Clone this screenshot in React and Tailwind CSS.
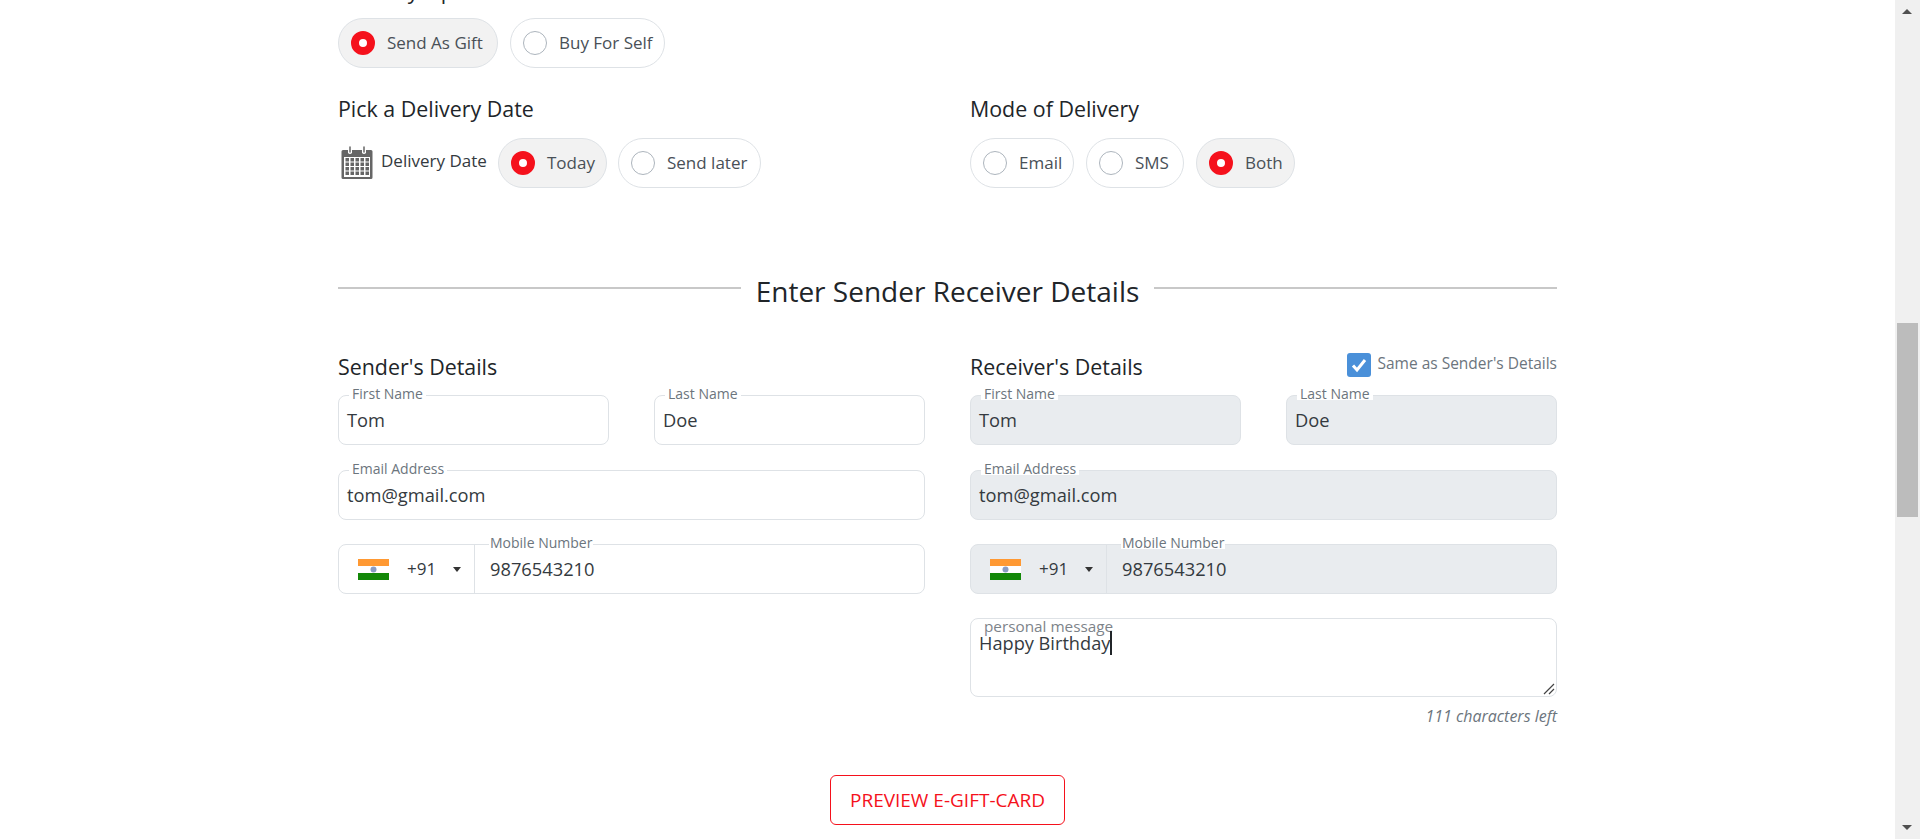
import React from 'react';

const Radio = ({ label, checked, className = '' }) => (
  <div className={`h-[50px] flex items-center rounded-[25px] border border-[#dee2e6] pl-3 ${checked ? 'bg-[#f2f2f2]' : 'bg-white'} ${className}`}>
    {checked ? (
      <span className="w-6 h-6 rounded-full border-[8px] border-[#f5111c] bg-white shrink-0" />
    ) : (
      <span className="w-6 h-6 rounded-full border border-[#adb5bd] bg-white shrink-0" />
    )}
    <span className="ml-[12px] text-[17px] text-[#495057] whitespace-nowrap">{label}</span>
  </div>
);

const CalendarIcon = () => (
  <svg width="32" height="34" viewBox="0 0 32 34" className="shrink-0">
    <path fillRule="evenodd" fill="#666" d="M2 4h5v3a3 3 0 0 0 4 0V4h10v3a3 3 0 0 0 4 0V4h5a1.5 1.5 0 0 1 1.5 1.5v26A1.5 1.5 0 0 1 30 33H2a1.5 1.5 0 0 1-1.5-1.5v-26A1.5 1.5 0 0 1 2 4z" />
    <path d="M9 1v5M23 1v5" stroke="#666" strokeWidth="1.5" strokeLinecap="round" />
    <rect x="3" y="11" width="26" height="20" fill="#fff" />
    {[12, 16.5, 21, 25.5].map((y) =>
      [4.5, 9.5, 14.5, 19.5, 24.5].map((x) => (
        <rect key={`${x}-${y}`} x={x} y={y} width="3.5" height="3.5" fill="#666" />
      ))
    )}
  </svg>
);

const Flag = () => (
  <svg width="31" height="21" viewBox="0 0 31 21" className="shrink-0">
    <rect width="31" height="7" fill="#ff9933" />
    <rect y="7" width="31" height="7" fill="#ffffff" />
    <rect y="14" width="31" height="7" fill="#138808" />
    <circle cx="15.5" cy="10.5" r="3" fill="#8a9cc4" />
  </svg>
);

const Field = ({ label, value, disabled, className = '' }) => (
  <div className={`relative h-[50px] flex items-center rounded-lg border border-[#dee2e6] px-2 ${disabled ? 'bg-[#e9ecef]' : 'bg-white'} ${className}`}>
    <span className="absolute left-[10px] -top-[8px] bg-white px-[3px] text-[14px] leading-[12px] text-[#6c757d] whitespace-nowrap">{label}</span>
    <span className="text-[18.3px] text-[#343a40] whitespace-nowrap">{value}</span>
  </div>
);

const PhoneField = ({ disabled }) => (
  <div className={`relative h-[50px] flex items-center rounded-lg border border-[#dee2e6] ${disabled ? 'bg-[#e9ecef]' : 'bg-white'}`}>
    <div className="w-[136px] h-full flex items-center pl-[19px] border-r border-[#dee2e6] shrink-0">
      <Flag />
      <span className="ml-[18px] text-[17px] text-[#343a40]">+91</span>
      <span className="ml-[17px] w-0 h-0 border-x-[4px] border-x-transparent border-t-[5px] border-t-[#333]" />
    </div>
    <span className="absolute left-[150px] -top-[8px] bg-white px-[1px] text-[14px] leading-[12px] text-[#6c757d] whitespace-nowrap">Mobile Number</span>
    <span className="ml-[15px] text-[18.3px] text-[#343a40]">9876543210</span>
  </div>
);

const DetailFields = ({ disabled }) => (
  <>
    <div className="flex justify-between">
      <Field label="First Name" value="Tom" disabled={disabled} className="w-[271px]" />
      <Field label="Last Name" value="Doe" disabled={disabled} className="w-[271px]" />
    </div>
    <Field label="Email Address" value="tom@gmail.com" disabled={disabled} className="mt-[25px]" />
    <div className="mt-[24px]">
      <PhoneField disabled={disabled} />
    </div>
  </>
);

export default function App() {
  return (
    <div className="h-[839px] overflow-hidden flex bg-white font-['Open_Sans',sans-serif]">
      <main className="flex-1 min-w-0">
        <div className="w-[1219px] mx-auto">
          <h3 className="-mt-[24px] h-7 leading-[30px] text-[21.4px] text-[#212529]">Delivery Option</h3>
          <div className="mt-[14px] flex gap-3">
            <Radio label="Send As Gift" checked className="w-[160px]" />
            <Radio label="Buy For Self" className="w-[155px]" />
          </div>

          <div className="mt-[26px] grid grid-cols-[587px_587px] gap-x-[45px]">
            <div>
              <h3 className="h-7 leading-[30px] text-[21.4px] text-[#212529]">Pick a Delivery Date</h3>
              <div className="mt-4 flex items-center">
                <div className="w-[160px] flex items-center pl-[3px]">
                  <CalendarIcon />
                  <span className="ml-[8px] -mt-[4px] text-[17px] text-[#343a40] whitespace-nowrap">Delivery Date</span>
                </div>
                <Radio label="Today" checked className="w-[109px]" />
                <Radio label="Send later" className="w-[143px] ml-[11px]" />
              </div>
            </div>
            <div>
              <h3 className="h-7 leading-[30px] text-[21.4px] text-[#212529]">Mode of Delivery</h3>
              <div className="mt-4 flex gap-3">
                <Radio label="Email" className="w-[104px]" />
                <Radio label="SMS" className="w-[98px]" />
                <Radio label="Both" checked className="w-[99px]" />
              </div>
            </div>
          </div>

          <div className="mt-[83px] h-10 flex items-center">
            <div className="flex-1 h-[2px] bg-[#c8c8c8] -mt-[6px]" />
            <h2 className="mx-[15px] text-[28px] text-[#212529] whitespace-nowrap">Enter Sender Receiver Details</h2>
            <div className="flex-1 h-[2px] bg-[#c8c8c8] -mt-[6px]" />
          </div>

          <div className="mt-[42px] grid grid-cols-[587px_587px] gap-x-[45px]">
            <div>
              <h3 className="h-7 leading-7 text-[21.4px] text-[#212529] mb-[14px]">Sender's Details</h3>
              <DetailFields />
            </div>
            <div>
              <div className="h-7 mb-[14px] flex justify-between">
                <h3 className="leading-7 text-[21.4px] text-[#212529]">Receiver's Details</h3>
                <div className="flex items-center h-[24px] gap-[6px]">
                  <span className="w-6 h-6 rounded-[3px] bg-[#4a90d9] flex items-center justify-center">
                    <svg width="18" height="18" viewBox="0 0 18 18" fill="none">
                      <path d="M3 9.5l4 4.5 8-10" stroke="#fff" strokeWidth="3" />
                    </svg>
                  </span>
                  <span className="-mt-[3px] text-[15.5px] text-[#6c757d] whitespace-nowrap">Same as Sender's Details</span>
                </div>
              </div>
              <DetailFields disabled />
              <div className="relative mt-[24px] h-[79px] rounded-lg border border-[#dee2e6] bg-white">
                <span className="absolute left-[13px] -top-[1px] text-[15.3px] leading-[16px] text-[#7d8389] whitespace-nowrap">personal message</span>
                <span className="absolute left-2 top-[12px] text-[18.2px] leading-[24px] text-[#343a40] border-r-2 border-[#212529] whitespace-nowrap">Happy Birthday</span>
                <svg width="12" height="12" viewBox="0 0 12 12" className="absolute right-[1px] bottom-[1px]" fill="none">
                  <path d="M1 11L11 1M6 11l5-5" stroke="#444" strokeWidth="1.2" />
                </svg>
              </div>
              <p className="mt-[8px] h-[22px] leading-[22px] text-right italic text-[16px] text-[#6c757d]">111 characters left</p>
            </div>
          </div>

          <div className="mt-[48px] flex justify-center">
            <button type="button" className="w-[235px] h-[50px] rounded-md border border-[#f5111c] bg-white text-[19px] text-[#f5111c]">PREVIEW E-GIFT-CARD</button>
          </div>
        </div>
      </main>

      <div className="w-[25px] h-full bg-[#f0f0f0] relative shrink-0">
        <span className="absolute left-[7px] top-[9px] w-0 h-0 border-x-[5.5px] border-x-transparent border-b-[5px] border-b-[#505050]" />
        <div className="absolute left-[2px] top-[323px] w-[21px] h-[194px] bg-[#bcbcbc]" />
        <span className="absolute left-[7px] bottom-[9px] w-0 h-0 border-x-[5.5px] border-x-transparent border-t-[5px] border-t-[#505050]" />
      </div>
    </div>
  );
}
